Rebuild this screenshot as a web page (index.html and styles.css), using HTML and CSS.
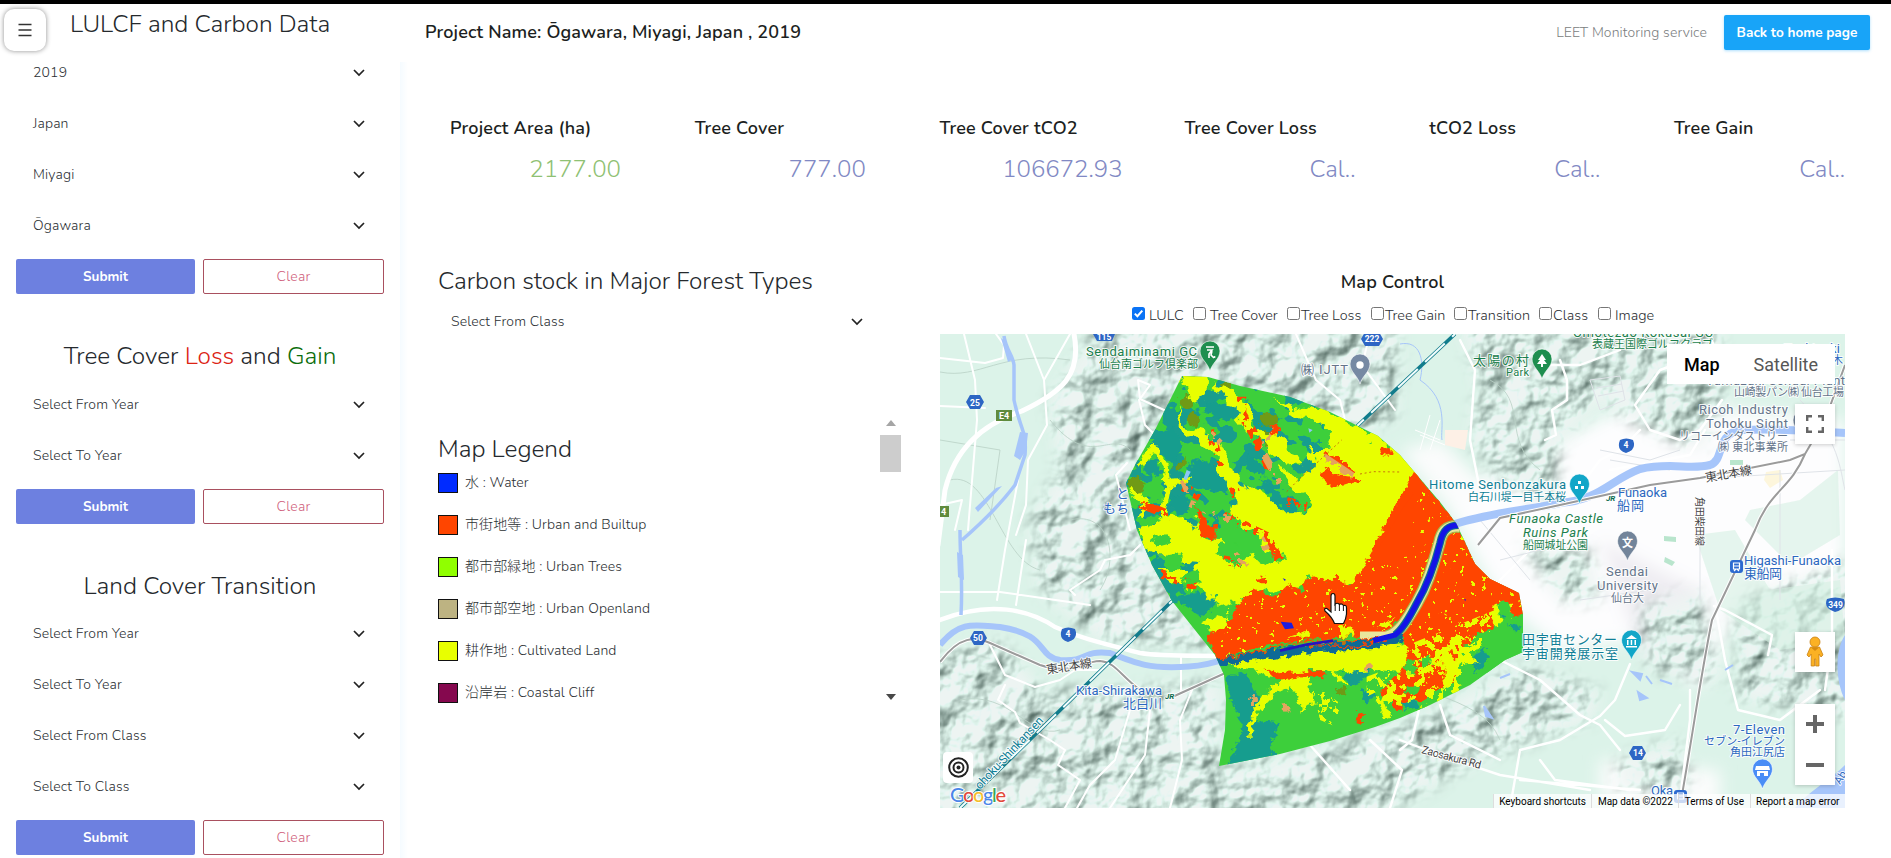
FILE: index.html
```html
<!DOCTYPE html>
<html lang="en">
<head>
<meta charset="utf-8">
<title>LEET Monitoring service</title>
<link rel="stylesheet" href="styles.css">
</head>
<body>
<svg class="sprites" width="0" height="0" aria-hidden="true">
  <symbol id="chev" viewBox="0 0 12 8"><path d="M1 1 6 6 11 1" fill="none" stroke="#222" stroke-width="1.7"/></symbol>
</svg>
<div class="app">
  <aside class="sidebar">
    <div class="side-top">
      <button class="menu-btn" aria-label="Menu"><svg width="14" height="14" viewBox="0 0 14 14"><path d="M.5 1.5h13M.5 7h13M.5 12.5h13" stroke="#333" stroke-width="1.3"/></svg></button>
      <h2 class="heading">LULCF and Carbon Data</h2>
    </div>
    <section class="group group-first">
      <div class="select"><span>2019</span><svg class="chev"><use href="#chev"/></svg></div>
      <div class="select"><span>Japan</span><svg class="chev"><use href="#chev"/></svg></div>
      <div class="select"><span>Miyagi</span><svg class="chev"><use href="#chev"/></svg></div>
      <div class="select"><span>Ōgawara</span><svg class="chev"><use href="#chev"/></svg></div>
      <div class="actions"><button class="btn submit">Submit</button><button class="btn clear">Clear</button></div>
    </section>
    <section class="group">
      <h2 class="heading">Tree Cover <span class="loss">Loss</span> and <span class="gain">Gain</span></h2>
      <div class="select"><span>Select From Year</span><svg class="chev"><use href="#chev"/></svg></div>
      <div class="select"><span>Select To Year</span><svg class="chev"><use href="#chev"/></svg></div>
      <div class="actions"><button class="btn submit">Submit</button><button class="btn clear">Clear</button></div>
    </section>
    <section class="group group-last">
      <h2 class="heading">Land Cover Transition</h2>
      <div class="select"><span>Select From Year</span><svg class="chev"><use href="#chev"/></svg></div>
      <div class="select"><span>Select To Year</span><svg class="chev"><use href="#chev"/></svg></div>
      <div class="select"><span>Select From Class</span><svg class="chev"><use href="#chev"/></svg></div>
      <div class="select"><span>Select To Class</span><svg class="chev"><use href="#chev"/></svg></div>
      <div class="actions"><button class="btn submit">Submit</button><button class="btn clear">Clear</button></div>
    </section>
  </aside>

  <main class="main">
    <header class="topbar">
      <h1 class="project">Project Name: Ōgawara, Miyagi, Japan , 2019</h1>
      <span class="service">LEET Monitoring service</span>
      <button class="home">Back to home page</button>
    </header>

    <section class="stats">
      <div class="stat"><h3>Project Area (ha)</h3><p class="green">2177.00</p></div>
      <div class="stat"><h3>Tree Cover</h3><p>777.00</p></div>
      <div class="stat"><h3>Tree Cover tCO2</h3><p class="wide">106672.93</p></div>
      <div class="stat"><h3>Tree Cover Loss</h3><p>Cal..</p></div>
      <div class="stat"><h3>tCO2 Loss</h3><p>Cal..</p></div>
      <div class="stat"><h3>Tree Gain</h3><p>Cal..</p></div>
    </section>

    <div class="content">
      <section class="left">
        <h2 class="heading">Carbon stock in Major Forest Types</h2>
        <div class="select"><span>Select From Class</span><svg class="chev"><use href="#chev"/></svg></div>
        <div class="legend">
          <div class="legend-list">
            <h2 class="heading">Map Legend</h2>
            <div class="item"><i class="sw water"></i><span>水 : Water</span></div>
            <div class="item"><i class="sw urban"></i><span>市街地等 : Urban and Builtup</span></div>
            <div class="item"><i class="sw utrees"></i><span>都市部緑地 : Urban Trees</span></div>
            <div class="item"><i class="sw uopen"></i><span>都市部空地 : Urban Openland</span></div>
            <div class="item"><i class="sw cult"></i><span>耕作地 : Cultivated Land</span></div>
            <div class="item"><i class="sw cliff"></i><span>沿岸岩 : Coastal Cliff</span></div>
          </div>
          <div class="scrollbar"><i class="up"></i><i class="thumb"></i><i class="down"></i></div>
        </div>
      </section>

      <section class="right">
        <h3 class="map-title">Map Control</h3>
        <div class="checks">
          <label><i class="box on"><svg viewBox="0 0 13 13"><path d="M2.8 6.6 5.4 9.2 10.3 3.6" fill="none" stroke="#fff" stroke-width="2"/></svg></i><span class="sp">LULC</span></label>
          <label><i class="box"></i><span class="sp">Tree Cover</span></label>
          <label><i class="box"></i><span>Tree Loss</span></label>
          <label><i class="box"></i><span>Tree Gain</span></label>
          <label><i class="box"></i><span>Transition</span></label>
          <label><i class="box"></i><span>Class</span></label>
          <label><i class="box"></i><span class="sp">Image</span></label>
        </div>
        <div class="map">
<svg class="canvas" width="905" height="474" viewBox="940 334 905 474">
<defs>
  <filter id="relief" x="920" y="314" width="945" height="514" filterUnits="userSpaceOnUse" color-interpolation-filters="sRGB">
    <feTurbulence type="fractalNoise" baseFrequency=".028 .03" numOctaves="4" seed="11"/>
    <feGaussianBlur stdDeviation="1.3"/>
    <feDiffuseLighting surfaceScale="9" diffuseConstant="1.24" lighting-color="#e3f3ec"><feDistantLight azimuth="225" elevation="55"/></feDiffuseLighting>
    <feComponentTransfer><feFuncR type="linear" slope=".8" intercept=".13"/><feFuncG type="linear" slope=".74" intercept=".22"/><feFuncB type="linear" slope=".76" intercept=".19"/></feComponentTransfer>
  </filter>
  <filter id="soft" x="-20%" y="-20%" width="140%" height="140%"><feGaussianBlur stdDeviation="8"/></filter>
  <filter id="rough" x="-10%" y="-10%" width="120%" height="120%">
    <feTurbulence type="fractalNoise" baseFrequency=".022" numOctaves="3" seed="4"/>
    <feDisplacementMap in="SourceGraphic" scale="60" xChannelSelector="R" yChannelSelector="G"/>
  </filter>
  <filter id="rough2" x="-10%" y="-10%" width="120%" height="120%">
    <feTurbulence type="fractalNoise" baseFrequency=".05" numOctaves="3" seed="9"/>
    <feDisplacementMap in="SourceGraphic" scale="30" xChannelSelector="R" yChannelSelector="G"/>
  </filter>
  <filter id="patch" x="0" y="0" width="100%" height="100%" color-interpolation-filters="sRGB">
    <feTurbulence type="fractalNoise" baseFrequency=".015 .018" numOctaves="3" seed="21"/>
    <feColorMatrix values="0 0 0 0 0  0 0 0 0 0  0 0 0 0 0  60 0 0 0 -31.5" result="m"/>
    <feComposite in="SourceGraphic" in2="m" operator="in"/>
  </filter>
  <filter id="spots" x="-20%" y="-20%" width="140%" height="140%" color-interpolation-filters="sRGB">
    <feTurbulence type="fractalNoise" baseFrequency=".035" numOctaves="4" seed="8"/>
    <feColorMatrix values="0 0 0 0 0  0 0 0 0 0  0 0 0 0 0  0 0 60 0 -32" result="m"/>
    <feComposite in="SourceGraphic" in2="m" operator="in"/>
  </filter>
  <filter id="grains" x="0" y="0" width="100%" height="100%" color-interpolation-filters="sRGB">
    <feTurbulence type="fractalNoise" baseFrequency=".06" numOctaves="3" seed="3"/>
    <feColorMatrix values="0 0 0 0 0  0 0 0 0 0  0 0 0 0 0  60 0 0 0 -42.5" result="m"/>
    <feComposite in="SourceGraphic" in2="m" operator="in"/>
  </filter>
  <mask id="hills" maskUnits="userSpaceOnUse" x="900" y="300" width="1000" height="560">
    <g filter="url(#soft)" fill="#fff">
      <path d="M1100 320H1400L1395 420 1330 440 1290 400 1190 385 1180 400 1140 460 1130 510 1170 600 1215 650 1100 640 1040 590 1030 520 1060 470 1050 400Z"/>
      <path d="M1460 320H1720L1725 400 1700 450 1650 430 1600 400 1560 440 1555 500 1500 485 1470 440 1480 390Z"/>
      <path d="M920 660 1000 640 1040 690 1130 690 1220 680 1220 770 1340 745 1430 715 1520 665 1600 690 1590 720 1480 760 1350 830H920Z"/>
      <path d="M1520 545 1590 550 1600 600 1560 600ZM1640 610 1700 590 1720 680 1650 670ZM1735 600 1860 560 1860 720 1740 700ZM1620 760 1680 740 1690 790 1620 790Z"/>
    </g>
  </mask>
  <clipPath id="aoi"><path d="M1182 376 1208 377 1240 386 1290 397 1330 412 1378 436 1400 455 1417 475 1440 502 1456 523 1465 542 1475 564 1490 579 1519 593 1523 615 1523 652 1505 660 1470 685 1430 705 1400 718 1375 727 1330 741 1280 754 1219 766 1225 730 1226 700 1224 675 1215 655 1195 630 1172 601 1152 565 1137 530 1130 500 1126 483 1135 465 1155 430Z"/></clipPath>
  <path id="pin" d="M0 0C-2-8-10-12-10-20a10 10 0 0 1 20 0C10-12 2-8 0 0Z"/>
</defs>
<rect x="940" y="334" width="905" height="474" fill="#dcf3e9"/>
<g filter="url(#soft)">
  <path d="M1560 440 1640 400 1845 420V600L1740 610 1700 690 1640 640 1560 650 1500 600 1450 510 1480 480Z" fill="#fdfdfe"/>
  <path d="M1600 540 1700 590 1700 680 1640 650Z" fill="#efedf2"/>
  <path d="M1400 450 1440 440 1480 480 1450 510ZM1600 760 1720 770 1720 808 1600 800Z" fill="#fbfcfc"/>
</g>
<g mask="url(#hills)"><rect x="920" y="314" width="945" height="514" filter="url(#relief)"/></g>
<g fill="#d5f0e2">
  <path d="M1750 510 1800 500 1838 470 1840 535 1790 565 1745 520ZM1695 535 1735 530 1770 590 1840 580 1845 640 1780 650 1720 610Z" opacity=".6"/>
  <path d="M1664 536 1676 537V542L1664 541ZM1665 557 1675 562 1672 566 1664 562ZM1730 460H1743V465H1730Z" fill="#b9e5cd"/>
  <path d="M1445 430 1468 430 1465 450 1445 445Z" fill="#fdf0e6"/><path d="M1766 472 1780 470 1783 480 1770 488 1764 480Z" fill="#fdf6dc"/>
</g>
<g fill="none" stroke="#b9d0c5" stroke-width=".8">
  <path d="M940 372C980 380 1000 350 1070 360M950 480C990 470 1000 560 1040 570M940 440 1000 450 990 520M960 700C1010 690 1030 740 1060 730M1370 650C1400 700 1480 690 1500 740M1050 420C1090 470 1110 430 1130 450M1070 520C1110 510 1120 560 1100 590M1490 380C1530 400 1500 440 1540 470"/>
</g>
<g fill="none" stroke="#fff" stroke-linejoin="round" stroke-linecap="round">
  <path d="M1074 334C1082 375 1062 392 1022 411 980 425 955 450 945 490L938 545" stroke-width="5"/>
  <path d="M964 334 975 380 977 420 968 530M996 334 1004 345 1003 358 985 363 940 358M1026 334 1044 380 1070 334M1044 380 1047 425 1028 460 1026 505 1016 535M940 406 985 408M940 505 962 500 955 530M1018 480 1005 550 997 600M1026 540 1016 605M940 592 1000 592 1090 605M1140 399 1150 385 1138 380ZM1139 400 1145 425 1165 445M1140 399 1175 415M1296 334 1305 355 1316 380 1340 400 1345 420M1370 334 1362 365 1395 410" stroke-width="2"/>
  <path d="M940 620C990 600 1030 610 1055 627 1085 640 1110 645 1140 653 1165 657 1200 655 1228 656" stroke-width="4.5"/>
  <path d="M990 645 1005 675 1035 687 1060 680 1075 670 1100 670M1005 685 998 700 1015 712 1020 723 1050 740 1065 750 1058 765 1080 780 1065 808M1130 710 1115 760 1090 785 1077 808M1150 710 1145 755 1110 808M1192 690 1180 720 1182 760 1170 808M1181 655V690M1075 595 1070 590 1100 570 1105 560 1130 555 1140 545M1130 530 1116 475 1127 463" stroke-width="2"/>
  <path d="M1460 340 1475 370 1470 440 1480 490M1560 360 1567 380 1567 400 1552 410 1556 435 1545 440M1543 365 1580 365 1620 350M1710 334 1715 350 1660 370 1635 405 1650 430 1680 440 1700 430 1722 400M1500 660 1540 680 1580 715 1600 725 1620 750M1630 664 1615 700 1600 716 1560 740 1520 750 1510 808M1605 720 1625 736 1665 730 1680 705M1520 780 1640 790M1540 760 1555 780 1630 790M1420 705 1412 740 1400 750M1400 740 1440 755 1500 775 1590 790M1440 705 1450 735 1500 760M1640 430 1620 450 1600 460 1570 500 1540 540 1500 580M1716 610 1725 660 1738 710 1780 720 1820 690M1714 606 1725 610 1772 635 1768 655M1697 520V545M1610 470 1690 455 1705 430M1832 550V640L1825 690M1370 740 1402 770 1390 808M1300 747 1310 745 1350 790M1690 690 1690 720 1680 800 1720 808" stroke-width="2.4"/>
</g>
<g fill="none" stroke="#dfe3e8" stroke-width="1">
  <path d="M1590 380 1620 376 1625 400 1600 410ZM1596 388 1622 384M1598 396 1624 391M1500 560 1580 540M1480 520 1530 580M1600 450 1650 460 1680 450M1610 460 1670 470M1680 480 1845 470M1700 500 1700 600M1780 470V600M1580 600 1650 590M1790 440 1845 440M1800 400C1840 440 1840 470 1845 490"/>
  <path d="M1415 430 1440 440M1420 435 1445 445M1430 415 1420 450M1440 420 1430 450" stroke="#fff"/>
</g>
<g fill="none" stroke="#a6c5fa">
  <path d="M1004 336C1006 350 1013 355 1014 365L1014 400C1020 430 1027 430 1025 455L1015 485C1000 505 985 520 962 540M960 530C960 560 963 580 961 615" stroke-width="3.500"/>
  <path d="M1020 432 1028 433 1026 450 1020 460 1014 456ZM1001 338 1006 342 1012 360 1008 362ZM996 488 1002 486 978 512 975 508ZM957 552 963 555 964 580 958 577Z" fill="#a6c5fa" stroke="none"/>
  <path d="M940 645C960 620 975 625 1000 627 1050 635 1035 655 1060 660 1090 662 1080 650 1110 653 1140 665 1150 668 1180 667 1210 667 1215 660 1235 658" stroke-width="6"/>
  <path d="M1452 525C1490 512 1530 510 1560 503 1600 500 1610 480 1640 469 1670 462 1690 470 1710 465 1725 460 1715 435 1740 430 1790 428 1820 432 1845 433" stroke-width="8"/>
  <path d="M1400 344C1420 340 1425 360 1420 380 1450 400 1440 430 1442 440" stroke-width="1"/>
  <path d="M1845 635C1835 650 1835 680 1845 700ZM1795 808C1810 790 1830 780 1845 765V808Z" fill="#a6c5fa" stroke="none"/>
  <path d="M1632 672 1642 674 1640 680ZM1646 676 1652 684M1638 692 1647 698 1640 700ZM1660 680 1672 684M1484 706 1492 718 1486 716ZM1500 678 1510 674M1725 670 1733 665" fill="#a6c5fa" stroke-width="2"/>
</g>
<g fill="none">
  <path d="M940 662C960 635 975 637 990 643L1040 665C1070 675 1080 662 1100 661 1115 662 1120 675 1140 690M1170 698 1232 670M1478 545 1500 518 1560 505 1650 485 1700 478 1790 460 1805 454 1825 420 1845 365M1805 454C1790 490 1770 490 1755 530L1712 620C1700 680 1695 720 1682 795" stroke="#fff" stroke-width="4"/>
  <path d="M940 662C960 635 975 637 990 643L1040 665C1070 675 1080 662 1100 661 1115 662 1120 675 1140 690M1170 698 1232 670M1478 545 1500 518 1560 505 1650 485 1700 478 1790 460 1805 454 1825 420 1845 365M1805 454C1790 490 1770 490 1755 530L1712 620C1700 680 1695 720 1682 795" stroke="#9b9b9b" stroke-width="2"/>
  <path d="M1172 601 960 808M1455 334 1356 427" stroke="#117c8c" stroke-width="3.600"/>
  <path d="M1172 601 960 808M1455 334 1356 427" stroke="#f2fdfd" stroke-width="2" stroke-dasharray="27 10" stroke-dashoffset="-14"/>
</g>

<g clip-path="url(#aoi)"><g transform="translate(1120 370) scale(.33333)">
  <path d="M0 0H1230V1210H0Z" fill="#3dcf3b"/>
  <path d="M0 0H600L620 300 560 440H300L320 700H0Z" fill="#189d8e" filter="url(#patch)"/>
  <g fill="#189d8e" filter="url(#rough2)">
    <path d="M250 100 330 105 355 140 320 155 260 130ZM90 210 160 170 190 230 160 280 110 240ZM70 275 115 265 115 320 70 310ZM170 330 240 260 330 320 320 370 260 360 210 350ZM140 370 200 380 210 420 170 440ZM380 250 430 290 440 320 380 300ZM400 140 460 130 450 190 420 200ZM420 320 480 370 530 400 540 430 490 420 430 360ZM550 215 600 210 600 270 570 250ZM50 410 90 400 110 440 60 440Z"/>
    <path d="M320 920 380 910 400 960 440 1000 370 1060 330 990ZM320 1190 350 1120 380 1050 480 1060 450 1130 470 1180ZM670 910 750 890 740 930 690 950ZM720 960 770 970 740 1010ZM1060 860 1100 830 1090 900 1040 910ZM160 680 260 660 300 700 240 740ZM350 1040 400 1040 380 1080Z"/>
  </g>
  <g fill="#6f9a12" filter="url(#rough2)"><circle cx="200" cy="95" r="20"/><circle cx="320" cy="52" r="16"/><ellipse cx="220" cy="150" rx="14" ry="24"/><ellipse cx="445" cy="150" rx="26" ry="20"/><path d="M420 180 450 190 470 240 440 230ZM160 290 200 260 200 285 165 305Z"/><circle cx="50" cy="345" r="26"/><circle cx="1155" cy="740" r="14"/><circle cx="665" cy="965" r="14"/></g>
  <g fill="#e8ff00" filter="url(#rough)">
    <path d="M180 10 260 15 265 60 240 100 200 90ZM280 40 350 70 385 115 400 170 430 200 470 190 510 230 545 285 500 290 440 250 395 190 340 120Z"/>
    <path d="M165 100 200 170 270 190 320 250 345 310 420 400 470 480 530 520 480 570 400 480 330 430 340 370 290 280 240 225 190 190Z"/>
    <path d="M455 90 540 115 620 125 700 160 780 205 900 270 900 370 760 560 700 660 640 630 560 625 540 660 480 650 380 680 300 710 230 650 180 650 120 600 200 600 240 570 100 560 60 480 150 440 220 450 240 500 300 510 345 590 390 560 470 590 500 560 440 480 400 400 390 350 440 370 500 430 570 430 575 390 520 350 470 290 520 310 560 320 600 290 570 240 620 240 640 190 590 170 580 150 520 130Z"/>
    <path d="M250 760 300 730 340 770 290 790Z"/>
  </g>
  <path d="M590 250 870 290 870 380 700 620 580 590 520 500 580 400Z" fill="#e8ff00"/>
  <path d="M60 290 100 230 140 290 145 350 130 430 150 480M30 360 80 400 60 440M140 340 210 330" fill="none" stroke="#e8ff00" stroke-width="17" filter="url(#rough2)"/>
  <g fill="#3dcf3b" filter="url(#rough2)"><path d="M290 520 340 515 375 560 360 590 320 570 290 550ZM90 500 140 490 150 520 110 530ZM120 560 180 550 200 590 150 600ZM180 620 230 600 240 640 200 650ZM290 440 340 450 330 480 300 470ZM740 215 755 212 752 225ZM520 300 550 320 540 330 510 310Z"/></g>
  <path d="M882 305 1000 450 1060 570 1210 655 1215 735 1130 770 1060 800 1020 850 1010 930 940 965 900 1015 830 1020 780 960 840 910 855 800 700 800 560 810 420 830 290 870 260 800 320 760 370 690 400 655 460 680 500 645 545 660 570 615 625 640 650 615 665 640 700 645Z" fill="#ff4500" filter="url(#rough2)"/>
  <path d="M882 305 862 345 880 372 850 412 760 560 738 598 700 645 760 790 1150 740 1190 665 1060 570 1000 450Z" fill="#ff4500"/>
  <g fill="#ff4500" filter="url(#rough2)">
    <path d="M232 410 262 460 290 465 290 510 240 500ZM600 305 625 295 640 315 700 320 720 335 625 350ZM450 540 470 535 490 560 465 570ZM455 165 480 170 480 190 455 190ZM410 625 435 620 445 640 420 640ZM60 400 85 400 90 412ZM780 235 810 230 815 250 790 260Z"/>
  </g>
  <g fill="none" stroke="#ff4500" stroke-width="28" filter="url(#spots)"><path d="M365 80V130L400 190 430 260 465 330M190 350 240 380M290 430 340 450 440 500 470 550M60 400 160 440M620 240 650 270 710 300M500 395 560 410M310 570 370 580M120 610 230 650M270 180 300 290M340 350 350 380"/></g>
  <g fill="none" stroke="#e5a45e" stroke-width="22" filter="url(#spots)"><path d="M450 170 430 250 480 340M270 190 300 220M610 260 700 320M340 550 380 590M420 500 440 540M210 400 330 450M190 330 210 380"/></g>
  <path d="M300 620 860 560 900 350 1200 680 1000 1000 850 1000 850 790 300 870Z" fill="#e8ff00" filter="url(#grains)"/>
  <path d="M850 830 1000 770 1200 690 1220 800 950 1020 780 1000Z" fill="#e8ff00" filter="url(#spots)"/>
  <g fill="#3dcf3b" filter="url(#rough2)"><path d="M1130 700 1160 690 1180 740 1230 730V850L1140 890 1020 950 1010 920 1070 840 1120 780ZM850 880 880 870 890 910 860 910ZM900 870 930 850 940 880 910 895ZM860 950 900 950 890 970 860 970ZM850 1000 920 990 920 1010 850 1030ZM820 760 850 740 860 750 820 790Z"/></g>
  <g fill="#189d8e" filter="url(#rough2)"><path d="M1050 870 1090 830 1110 860 1070 910ZM1160 760 1200 770 1190 790ZM850 1000 890 990 900 1010 860 1020ZM1140 730 1160 735 1150 750Z"/></g>
  <g fill="#e8ff00" filter="url(#rough2)"><path d="M310 885 560 840 850 820 865 860 840 905 760 900 690 905 640 900 690 945 670 945 620 900 560 900 585 1000 560 1005 545 1025 530 980 510 950 470 970 430 1010 410 1030 395 1100 378 1100 400 1020 440 965 490 925 420 915 400 895ZM760 980 790 990 810 1040 800 1050ZM960 870 990 810 1010 830 1060 870 1080 880 1020 880 990 950 970 960 980 890 930 880ZM1110 740 1130 700 1145 760 1120 760ZM500 800 560 780 570 800ZM660 770 700 765 700 800 660 800ZM770 770 830 740 790 780Z"/></g>
  <g fill="#ff4500" filter="url(#rough2)"><path d="M430 895 480 910 610 900 615 925 560 920 470 930ZM710 1030 730 1030 728 1065 710 1060ZM990 840 1015 850 1010 870 995 860Z"/></g>
  <path d="M575 940 660 1000 650 1070 600 1050ZM740 920 820 890 800 950 740 980Z" fill="#e8ff00" filter="url(#spots)"/>
  <g fill="#e5a45e" filter="url(#rough2)"><circle cx="402" cy="990" r="12"/><circle cx="495" cy="1015" r="10"/><circle cx="745" cy="895" r="9"/></g>
  <g fill="none" stroke-linejoin="round">
    <path d="M1020 470C985 466 965 480 958 520 940 580 925 640 890 700 860 750 840 790 800 800" stroke="#a6b84a" stroke-width="38"/>
    <path d="M1020 470C985 466 965 480 958 520 940 580 925 640 890 700 860 750 840 790 800 800L720 800" stroke="#e9e79e" stroke-width="31"/>
    <path d="M850 800C800 820 740 825 640 830 540 840 460 850 380 862L290 880" stroke="#0b6a96" stroke-width="26" filter="url(#rough2)"/>
    <path d="M1020 466C985 464 968 480 960 520 945 580 925 640 890 700 870 740 845 780 825 795" stroke="#0e6f92" stroke-width="23"/>
    <path d="M820 800C700 820 640 810 560 815 460 830 380 855 300 868M560 822 700 832 800 806" stroke="#ff4500" stroke-width="4" filter="url(#rough2)"/>
    <path d="M1020 466C985 464 968 480 960 520 945 580 925 640 890 700 870 740 845 780 825 795L760 812" stroke="#1414e6" stroke-width="16"/>
    <path d="M640 812 560 824 480 842" stroke="#2414c0" stroke-width="8"/>
  </g>
  <path d="M482 755 515 758 522 775 495 778ZM488 625 497 628 495 634ZM1032 688 1038 688 1036 694Z" fill="#1c1ce0"/>
  <path d="M200 300 212 305 200 330 190 328ZM565 175 578 180 568 188Z" fill="#8fc5f5"/>
  <path d="M500 365 545 320 600 270 665 210M720 312 760 305 840 306" fill="none" stroke="#c05a10" stroke-width="2.500" stroke-dasharray="6 8"/>
</g></g>

<g class="lbl">
  <g class="halo">
    <text x="1086" y="356" textLength="111" class="poi">Sendaiminami GC</text>
    <text x="1099" y="368" textLength="99" class="poi cj s11">仙台南ゴルフ倶楽部</text>
    <text x="1301" y="374" textLength="47" class="gy cj">㈱ IJTT</text>
    <text x="1473" y="365" textLength="56" class="poi cj">太陽の村</text>
    <text x="1506" y="376" textLength="23" class="poi s11">Park</text>
    <text x="1573" y="337" textLength="140" class="poi">Omotezao Kokusai GC</text>
    <text x="1592" y="348" textLength="121" class="poi cj s11">表蔵王国際ゴルフクラブ</text>
    <text x="1784" y="353" textLength="56" class="blue">Tsukinoki</text>
    <text x="1832" y="364" class="blue cj s11">木</text>
    <text x="1706" y="385" textLength="139" class="gy">Yamazaki Sendai Plant</text>
    <text x="1734" y="396" textLength="110" class="gy cj s11">山崎製パン㈱ 仙台工場</text>
    <text x="1699" y="414" textLength="89" class="gy">Ricoh Industry</text>
    <text x="1706" y="428" textLength="82" class="gy">Tohoku Sight</text>
    <text x="1679" y="440" textLength="109" class="gy cj s11">リコーインダストリー</text>
    <text x="1718" y="451" textLength="70" class="gy cj s11">㈱ 東北事業所</text>
    <text x="1429" y="489" textLength="137" class="teal">Hitome Senbonzakura</text>
    <text x="1468" y="501" textLength="98" class="teal cj s11">白石川堤一目千本桜</text>
    <text x="1618" y="497" textLength="49" class="blue">Funaoka</text>
    <text x="1617" y="510" textLength="27" class="blue cj">船岡</text>
    <text x="1509" y="523" textLength="94" class="poi it">Funaoka Castle</text>
    <text x="1523" y="537" textLength="65" class="poi it">Ruins Park</text>
    <text x="1523" y="549" textLength="65" class="poi cj s11">船岡城址公園</text>
    <text x="1606" y="576" textLength="42" class="gy">Sendai</text>
    <text x="1597" y="590" textLength="61" class="gy">University</text>
    <text x="1611" y="602" textLength="33" class="gy cj s11">仙台大</text>
    <text x="1522" y="644" textLength="95" class="teal cj">田宇宙センター</text>
    <text x="1522" y="658" textLength="96" class="teal cj">宇宙開発展示室</text>
    <text x="1744" y="565" textLength="97" class="blue">Higashi-Funaoka</text>
    <text x="1744" y="578" textLength="38" class="blue cj">東船岡</text>
    <text x="1733" y="734" textLength="52" class="blue">7-Eleven</text>
    <text x="1704" y="745" textLength="81" class="blue cj s11">セブン-イレブン</text>
    <text x="1730" y="756" textLength="55" class="blue cj s11">角田江尻店</text>
    <text x="1651" y="795" textLength="22" class="blue">Oka</text>
    <text x="1076" y="695" textLength="86" class="blue">Kita-Shirakawa</text>
    <text x="1123" y="708" textLength="39" class="blue cj">北白川</text>
    <text x="1116" y="498" class="blue cj">と</text>
    <text x="1103" y="513" textLength="26" class="blue cj">もち</text>
    <text transform="translate(1047 674) rotate(-9)" textLength="46" class="dk cj s12">東北本線</text>
    <text transform="translate(1706 482) rotate(-10)" textLength="47" class="dk cj s12">東北本線</text>
    <text transform="translate(1696 497) rotate(90)" textLength="49" class="dk cj s9">角田柴田線</text>
    <text transform="translate(980 790) rotate(-47)" textLength="94" class="teal s12">ohoku-Shinkansen</text>
    <text transform="translate(1421 753) rotate(15)" textLength="61" class="dk s11">Zaosakura Rd</text>
    <text transform="translate(1840 785) rotate(-58)" class="blue s11">Ab</text>
    <text x="1606" y="501" class="jr">JR</text><text x="1165" y="699" class="jr">JR</text>
  </g>
  <g fill="#2d66c4"><path d="M966 402 970 395H980L984 402 980 409H970ZM1093 334H1115L1112 341H1097ZM1361 339 1365 332H1379L1383 339 1379 346H1365ZM970 638 974 631H983L987 638 983 645H974ZM1629 753 1633 746H1642L1646 753 1642 760H1633Z"/><path d="M1620 440Q1626 437 1633 440 1637 450 1626 453 1616 450 1620 440ZM1062 629Q1068 626 1075 629 1079 639 1068 642 1058 639 1062 629ZM1827 599Q1835 596 1844 599 1847 609 1835 612 1823 608 1827 599Z"/></g>
  <g fill="#fff" font-size="8.5" font-weight="700" text-anchor="middle"><text x="975" y="405.500">25</text><text x="1104" y="339.500">115</text><text x="1372" y="342">222</text><text x="978" y="641">50</text><text x="1638" y="756">14</text><text x="1626" y="448">4</text><text x="1068" y="637">4</text><text x="1835.500" y="608">349</text></g>
  <path d="M996 410H1012V421H996ZM940 506H949V517H940Z" fill="#5f8b3d"/><g fill="#fff" font-size="9" font-weight="700"><text x="999" y="419">E4</text><text x="941" y="515">4</text></g>
</g>
<g stroke="#fff" stroke-width=".6">
  <use href="#pin" x="1210" y="371" fill="#1e8e4f"/><use href="#pin" x="1360" y="384" fill="#7689a3"/><use href="#pin" x="1542" y="379" fill="#1e8e4f"/><use href="#pin" x="1579.500" y="504" fill="#12a6c8"/><use href="#pin" x="1627.500" y="561" fill="#72849a"/><use href="#pin" x="1631.500" y="660" fill="#12a6c8"/><use href="#pin" x="1762.500" y="789" fill="#4a8df6"/><use href="#pin" x="1803" y="440" fill="#72849a"/>
</g>
<g fill="#fff"><circle cx="1360" cy="365" r="3.700"/><path d="M1206 347H1214M1207 350 1212 350 1209 354 1209 358M1212 351 1211 355 1214 358" fill="none" stroke="#fff" stroke-width="1.600"/><circle cx="1214.500" cy="357" r="1"/><path d="M1542 354 1546 360H1544L1547 364H1543V367H1541V364H1537L1540 360H1538Z"/><path d="M1578 481h3v3h-3ZM1575 486h3v3h-3ZM1581 486h3v3h-3Z"/><text x="1622" y="547" font-size="11" class="cj b">文</text><path d="M1626 639 1631.500 635 1637 639ZM1627 640h1.500v5H1627ZM1630.700 640h1.500v5h-1.500ZM1634.500 640h1.500v5h-1.500ZM1626 646h11v1.500h-11Z"/><path d="M1756 766h13l1 4h-15ZM1757 771h11v5h-4v-3h-4v3h-3Z"/></g>
<g fill="#2c6ad0"><rect x="1730" y="560" width="13" height="13" rx="3"/><rect x="1674" y="790" width="13" height="13" rx="3"/></g><g fill="none" stroke="#fff" stroke-width="1.200"><path d="M1733.500 563h6v6h-6ZM1733.500 566h6M1734 571 1736 569M1739 571 1737 569M1677.500 793h6v6h-6ZM1677.500 796h6"/></g>
<text class="google" x="950" y="802" textLength="56"><tspan fill="#4a86e8">G</tspan><tspan fill="#e2493b">o</tspan><tspan fill="#f4bd2a">o</tspan><tspan fill="#4a86e8">g</tspan><tspan fill="#39a655">l</tspan><tspan fill="#e2493b">e</tspan></text>
<path d="M1331 596Q1331 593.500 1333 593.500T1335 596V604.500Q1337 602 1339.500 604.500 1341.500 603 1343.500 605.500 1346.500 604.500 1346.500 608V614Q1346 619 1343.500 623.500H1334.500Q1332 617 1325 611 1323.500 608 1327 608.500L1331 612Z" fill="#fff" stroke="#111" stroke-width="1.200"/><path d="M1335.200 604.500V611M1339.400 604.500V611M1343.400 605.500V611" stroke="#111" stroke-width="1"/>
</svg>
          <div class="types"><b>Map</b><span>Satellite</span></div>
          <div class="ctl full"><svg width="18" height="18" viewBox="0 0 18 18"><path d="M1.200 6V1.200H6M12 1.200H16.800V6M16.800 12V16.800H12M6 16.800H1.200V12" fill="none" stroke="#666" stroke-width="2.400"/></svg></div>
          <div class="ctl peg"><svg width="18" height="32" viewBox="0 0 18 32"><g fill="#fbb124" stroke="#c98012" stroke-width=".8"><path d="M4.500 11H13.500L17 19 15 21 13 18V30H9.700V23H8.500V30H5.200V18L3 21 1 19Z"/><circle cx="9" cy="6" r="5"/></g><path d="M5 11.500H13L9 15Z" fill="#d68a10"/></svg></div>
          <div class="ctl zoom"><svg width="18" height="18" viewBox="0 0 18 18"><path d="M9 0V18M0 9H18" stroke="#666" stroke-width="4"/></svg><svg width="18" height="4"><path d="M0 2H18" stroke="#666" stroke-width="4"/></svg></div>
          <div class="locate"><svg width="21" height="21" viewBox="0 0 21 21"><g fill="none" stroke="#222"><circle cx="10.500" cy="10.500" r="9.300" stroke-width="2"/><circle cx="10.500" cy="10.500" r="5" stroke-width="2"/></g><circle cx="10.500" cy="10.500" r="2" fill="#222"/></svg></div>
          <div class="credits"><span>Keyboard shortcuts</span><span>Map data ©2022</span><span>Terms of Use</span><span>Report a map error</span></div>
        </div>
      </section>
    </div>
  </main>
</div>
</body>
</html>
```
FILE: styles.css
```css
* { box-sizing: border-box; margin: 0; }
body { width: 1891px; height: 858px; overflow: hidden; background: #fff; color: #2b2f33; font: 300 14px/20px Nunito, Lato, "Noto Sans CJK JP", sans-serif; border-top: 4px solid #000; }
button { font: inherit; border: 0; }
.sprites { position: absolute; }
.app { display: flex; height: 854px; }
.heading { font-size: 24.4px; line-height: 29px; font-weight: 300; color: #25292d; white-space: nowrap; }

.sidebar { width: 400px; flex: none; }
.side-top { display: flex; height: 58px; padding: 5px 0 0 4px; gap: 24px; }
.side-top .heading { padding-top: 1px; }
.menu-btn { width: 42px; height: 42px; border-radius: 10px; background: #fff; box-shadow: 0 0 5px rgba(0,0,0,.45); display: grid; place-items: center; padding: 0; }
.group { padding: 0 16px; }
.group-first { margin-top: -15px; }
.group:not(.group-first) .heading { text-align: center; padding-top: 48px; margin-bottom: 8px; }
.group-last .heading { margin-bottom: 7px !important; }
.select { display: flex; align-items: center; justify-content: space-between; height: 51px; padding: 0 19px 0 17px; letter-spacing: .15px; }
.chev { width: 12px; height: 8px; }
.actions { display: flex; gap: 8px; margin-top: 8px; }
.btn { flex: 1 1 0; height: 35px; border-radius: 2px; padding: 0; }
.submit { background: #6d80e0; color: #fff; font-weight: 700; font-size: 13.5px; }
.clear { background: #fff; border: 1px solid #a9505f; color: #cf5f7d; letter-spacing: .2px; }
.loss { color: #dc2414; }
.gain { color: #0b6d0b; }

.main { flex: 1; min-width: 0; padding-left: 25px; background: linear-gradient(90deg, #f5fbff, #fff 8px) no-repeat 0 58px; }
.topbar { display: flex; align-items: center; height: 58px; padding-right: 21px; }
.project { font-size: 18px; font-weight: 600; letter-spacing: .15px; flex: 1; margin-bottom: 2px; color: #1c1f22; }
.service { color: #7a7d80; margin-right: 17px; letter-spacing: .1px; }
.home { width: 146px; height: 35px; border-radius: 2px; background: #18a4f8; color: #fff; font-weight: 700; font-size: 13.6px; box-shadow: 0 1px 3px rgba(24,164,248,.35); padding: 0; margin-bottom: 1px; }
.stats { display: grid; grid-template-columns: repeat(6, 244.8px); padding-left: 25px; height: 203px; padding-top: 56px; }
.stat { width: 171px; }
.stat h3, .map-title { font-size: 18px; line-height: 20px; font-weight: 600; letter-spacing: .2px; color: #1c1f22; white-space: nowrap; }
.stat p { font-size: 24px; line-height: 30px; margin-top: 16px; text-align: right; color: #8189c4; }
.stat .green { color: #8fc173; }
.stat .wide { margin-right: -12px; }

.content { display: flex; }
.left { width: 515px; padding: 2px 0 0 13px; flex: none; }
.left > .select { width: 447px; padding: 0 22px 0 13px; }
.legend { display: flex; margin-top: 67px; width: 463px; justify-content: space-between; }
.legend-list { padding-top: 21px; }
.legend-list .heading { margin-bottom: 9px; }
.item { display: flex; align-items: center; gap: 7px; height: 20px; margin-bottom: 22px; letter-spacing: .1px; }
.sw { width: 20px; height: 20px; border: 1px solid #111; }
.water { background: #002bff; } .urban { background: #ff4500; } .utrees { background: #90ff00; }
.uopen { background: #bdb382; } .cult { background: #e8ff00; } .cliff { background: #85084e; }
.scrollbar { width: 21px; height: 288px; display: flex; flex-direction: column; align-items: center; padding: 6px 0 2px; }
.up { border: 5.5px solid transparent; border-top: 0; border-bottom: 6px solid #a5a5a5; }
.down { border: 5.5px solid transparent; border-bottom: 0; border-top: 6px solid #484848; margin-top: auto; }
.thumb { width: 21px; height: 37px; background: #cdcdcd; margin-top: 9px; }

.right { width: 905px; padding-top: 7px; }
.map-title { text-align: center; }
.checks { display: grid; grid-template-columns: 61px 94px 84px 83px 85px 59px 60px; padding-left: 192px; margin-top: 14px; height: 28px; font-size: 14.4px; }
.checks label { display: flex; align-items: flex-start; white-space: nowrap; }
.checks span { line-height: 18px; padding-left: 1px; }
.checks .sp { padding-left: 4px; }
.box { width: 13px; height: 13px; border: 1px solid #767676; border-radius: 2.5px; margin-top: 1px; flex: none; }
.box.on { background: #0a73f5; border: 0; }
.box svg { display: block; width: 13px; height: 13px; }
.map { position: relative; width: 905px; height: 474px; overflow: hidden; }
.canvas { display: block; }
.lbl { font-family: Roboto, sans-serif; font-size: 13px; font-weight: 400; }
.halo text { paint-order: stroke; stroke: rgba(255,255,255,.85); stroke-width: 2px; stroke-linejoin: round; }
.lbl .cj, .cj { font-family: Roboto, "Noto Sans CJK JP", sans-serif; }
.s12 { font-size: 12px; } .s11 { font-size: 11px; } .s9 { font-size: 10px; }
.poi { fill: #1b7f4d; } .it { font-style: italic; } .gy { fill: #64748a; } .teal { fill: #0f7f96; } .blue { fill: #2c68c0; } .dk { fill: #444; } .b { font-weight: 700; }
.jr { fill: #0b6b4d; font-size: 8px; font-weight: 700; font-style: italic; }
.google { font: 500 20px Lato, sans-serif; paint-order: stroke; stroke: #fff; stroke-width: 2px; }
.types { position: absolute; left: 727px; top: 10px; width: 168px; height: 40px; background: #fff; display: flex; align-items: center; justify-content: space-between; padding: 0 17px 0 17px; font: 18px Roboto, sans-serif; color: #565656; }
.types b { font-weight: 500; color: #000; }
.ctl { position: absolute; left: 855px; width: 40px; background: #fff; box-shadow: 0 1px 4px rgba(0,0,0,.2); display: grid; place-items: center; }
.full { top: 70px; height: 40px; }
.peg { top: 298px; height: 40px; }
.zoom { top: 370px; height: 81px; align-content: space-between; padding: 11px 0 18px; }
.locate { position: absolute; left: 3px; top: 418px; width: 30px; height: 31px; background: #fff; border-radius: 4px; display: grid; place-items: center; }
.credits { position: absolute; right: 0; bottom: 0; height: 14px; display: flex; background: rgba(255,255,255,.75); font: 10px/15px Roboto, sans-serif; color: #000; white-space: nowrap; }
.credits span { padding: 0 5.5px; border-left: 1px solid #ddd; }
```
